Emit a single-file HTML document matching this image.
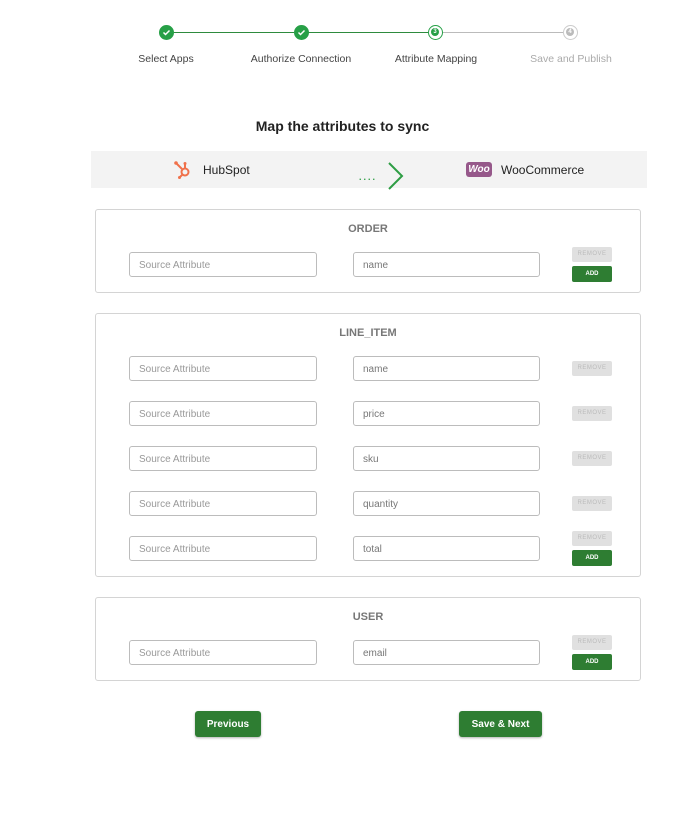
<!DOCTYPE html>
<html><head><meta charset="utf-8"><style>
*{margin:0;padding:0;box-sizing:border-box}
body{width:685px;height:817px;background:#fff;font-family:"Liberation Sans",sans-serif;position:relative;overflow:hidden}
.a{position:absolute}
.c{position:absolute;width:15px;height:15px;border-radius:50%;top:25px}
.lbl{position:absolute;top:53px;font-size:10.5px;color:#444;white-space:nowrap;transform:translateX(-50%)}
.box{position:absolute;left:95px;width:546px;border:1px solid #d4d4d4;border-radius:3px}
.t{position:absolute;left:0;right:0;text-align:center;font-size:11px;font-weight:bold;color:#777}
.in{position:absolute;width:188px;height:25px;border:1px solid #bcbcbc;border-radius:3px;font-size:10px;color:#999;padding:7px 9px}
.v{color:#777;width:187px;left:353px}
.rm{position:absolute;left:572px;width:40px;height:15px;background:#e0e0e0;border-radius:2px;color:#bbb;font-size:6px;text-align:center;line-height:15px;letter-spacing:.5px}
.ad{position:absolute;left:572px;width:40px;height:16px;background:#2e7d32;border-radius:2px;color:#fff;font-size:6px;font-weight:bold;text-align:center;line-height:16px}
.btn{position:absolute;top:711px;height:26px;background:#2e7d32;border-radius:3px;color:#fff;font-size:10px;font-weight:bold;text-align:center;line-height:27px;box-shadow:0 1px 2px rgba(0,0,0,.3)}
</style></head><body>
<div class="a" style="left:173px;top:32px;width:121px;height:1px;background:#2e8b3e"></div>
<div class="a" style="left:308px;top:32px;width:121px;height:1px;background:#2e8b3e"></div>
<div class="a" style="left:443px;top:32px;width:121px;height:1px;background:#bbb"></div>
<div class="c" style="left:159px;background:#27a047"><svg width="15" height="15"><path d="M4.5 7.5l2 2 4-4" stroke="#fff" stroke-width="1.5" fill="none"/></svg></div>
<div class="c" style="left:294px;background:#27a047"><svg width="15" height="15"><path d="M4.5 7.5l2 2 4-4" stroke="#fff" stroke-width="1.5" fill="none"/></svg></div>
<div class="c" style="left:428px;border:1.5px solid #27a047;background:#fff"><div style="position:absolute;left:2px;top:2px;width:8px;height:8px;border-radius:50%;background:#27a047;color:#fff;font-size:6px;text-align:center;line-height:8px;font-weight:bold">3</div></div>
<div class="c" style="left:563px;border:1.5px solid #ccc;background:#fff"><div style="position:absolute;left:2px;top:2px;width:8px;height:8px;border-radius:50%;background:#bbb;color:#fff;font-size:6px;text-align:center;line-height:8px;font-weight:bold">4</div></div>
<div class="lbl" style="left:166px">Select Apps</div>
<div class="lbl" style="left:301px">Authorize Connection</div>
<div class="lbl" style="left:436px">Attribute Mapping</div>
<div class="lbl" style="left:571px;color:#aaa">Save and Publish</div>

<div class="a" style="left:0;right:0;top:118px;text-align:center;font-size:14px;font-weight:bold;color:#222">Map the attributes to sync</div>

<div class="a" style="left:91px;top:151px;width:556px;height:37px;background:#f3f3f3"></div>
<svg class="a" style="left:174px;top:160px" width="20" height="20"><g stroke="#f0714b" stroke-width="2" fill="none"><circle cx="11" cy="12" r="3.5"/><path d="M2 3l6 6M11 4v5M6 17l3-3"/></g><circle cx="2" cy="3" r="1.8" fill="#f0714b"/><circle cx="11" cy="3.5" r="1.5" fill="#f0714b"/><circle cx="5.5" cy="17.5" r="1.5" fill="#f0714b"/></svg>
<div class="a" style="left:203px;top:163px;font-size:12px;color:#222">HubSpot</div>
<div class="a" style="left:359px;top:172px;font-size:9px;color:#2e9d44;letter-spacing:2px;font-weight:bold">....</div>
<svg class="a" style="left:386px;top:162px" width="20" height="28"><path d="M3 1l13 13L3 27" stroke="#2e9d44" stroke-width="2" fill="none"/></svg>
<div class="a" style="left:466px;top:162px;width:26px;height:15px;background:#96588a;border-radius:3px;color:#fff;font-size:10px;font-weight:bold;text-align:center;line-height:15px;font-style:italic">Woo</div>
<div class="a" style="left:501px;top:163px;font-size:12px;color:#222">WooCommerce</div>

<div class="box" style="top:209px;height:84px"><div class="t" style="top:13px">ORDER</div></div>
<div class="in" style="left:129px;top:252px">Source Attribute</div>
<div class="in v" style="top:252px">name</div>
<div class="rm" style="top:247px">REMOVE</div><div class="ad" style="top:266px">ADD</div>

<div class="box" style="top:313px;height:264px"><div class="t" style="top:13px">LINE_ITEM</div></div>
<div class="in" style="left:129px;top:356px">Source Attribute</div><div class="in v" style="top:356px">name</div><div class="rm" style="top:361px">REMOVE</div>
<div class="in" style="left:129px;top:401px">Source Attribute</div><div class="in v" style="top:401px">price</div><div class="rm" style="top:406px">REMOVE</div>
<div class="in" style="left:129px;top:446px">Source Attribute</div><div class="in v" style="top:446px">sku</div><div class="rm" style="top:451px">REMOVE</div>
<div class="in" style="left:129px;top:491px">Source Attribute</div><div class="in v" style="top:491px">quantity</div><div class="rm" style="top:496px">REMOVE</div>
<div class="in" style="left:129px;top:536px">Source Attribute</div><div class="in v" style="top:536px">total</div><div class="rm" style="top:531px">REMOVE</div><div class="ad" style="top:550px">ADD</div>

<div class="box" style="top:597px;height:84px"><div class="t" style="top:13px">USER</div></div>
<div class="in" style="left:129px;top:640px">Source Attribute</div><div class="in v" style="top:640px">email</div><div class="rm" style="top:635px">REMOVE</div><div class="ad" style="top:654px">ADD</div>

<div class="btn" style="left:195px;width:66px">Previous</div>
<div class="btn" style="left:459px;width:83px">Save &amp; Next</div>
</body></html>
